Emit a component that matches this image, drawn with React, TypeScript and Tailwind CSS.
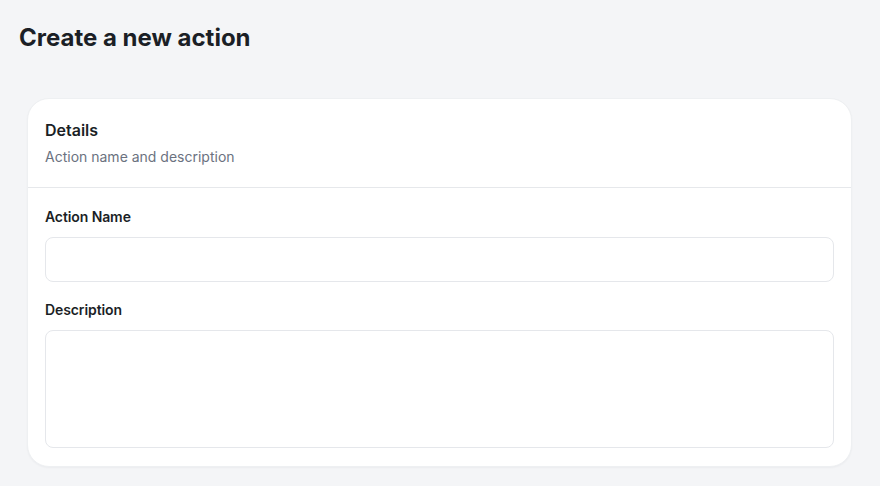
import React, { useState } from 'react';

export default function App() {
  const [name, setName] = useState('');
  const [description, setDescription] = useState('');

  return (
    <div
      className="min-h-screen bg-[#f4f5f7] px-[19px] pt-[22px] pb-5 text-[#1b1f26]"
      style={{ fontFamily: 'Inter, "Noto Sans", sans-serif' }}
    >
      <h1 className="text-2xl leading-8 font-bold">Create a new action</h1>

      <div className="mt-[44px] ml-[8px] mr-[9px] bg-white rounded-[22px] border border-[#eef0f2] shadow-[0_1px_2px_rgba(16,24,40,0.04)]">
        <div className="px-[17px] pt-[19px] pb-[20px]">
          <h2 className="text-base leading-6 font-semibold">Details</h2>
          <p className="mt-[5px] text-sm leading-5 text-[#6b7280]">Action name and description</p>
        </div>

        <div className="border-t border-[#e6e8eb] px-[17px] pt-[19px] pb-[18px]">
          <label className="block text-sm leading-5 font-semibold tracking-[-0.1px]">Action Name</label>
          <input
            type="text"
            value={name}
            onChange={(e) => setName(e.target.value)}
            className="mt-[10px] block w-full h-[45px] rounded-lg border border-[#e5e7eb] bg-white px-3 text-sm outline-none"
          />

          <label className="mt-[18px] block text-sm leading-5 font-semibold tracking-[-0.1px]">Description</label>
          <textarea
            value={description}
            onChange={(e) => setDescription(e.target.value)}
            className="mt-[10px] block w-full h-[118px] resize-none rounded-lg border border-[#e5e7eb] bg-white px-3 py-2 text-sm outline-none"
          />
        </div>
      </div>
    </div>
  );
}
